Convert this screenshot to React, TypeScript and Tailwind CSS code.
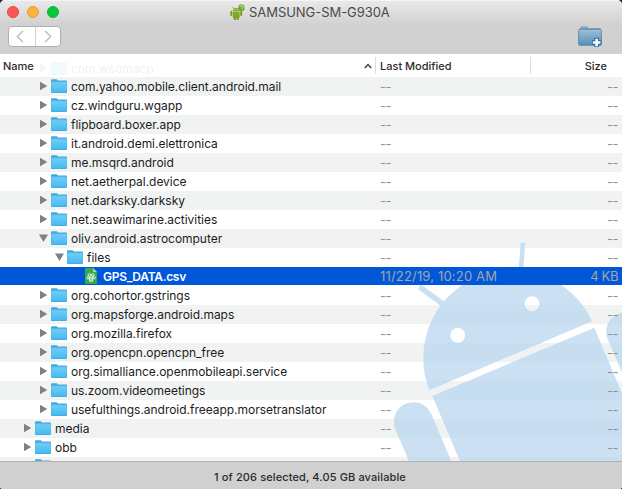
import React from "react";

type Row = { name: string; indent: number; kind: "closed" | "open" | "file" };

const rows: Row[] = [
  { name: "com.yahoo.mobile.client.android.mail", indent: 2, kind: "closed" },
  { name: "cz.windguru.wgapp", indent: 2, kind: "closed" },
  { name: "flipboard.boxer.app", indent: 2, kind: "closed" },
  { name: "it.android.demi.elettronica", indent: 2, kind: "closed" },
  { name: "me.msqrd.android", indent: 2, kind: "closed" },
  { name: "net.aetherpal.device", indent: 2, kind: "closed" },
  { name: "net.darksky.darksky", indent: 2, kind: "closed" },
  { name: "net.seawimarine.activities", indent: 2, kind: "closed" },
  { name: "oliv.android.astrocomputer", indent: 2, kind: "open" },
  { name: "files", indent: 3, kind: "open" },
  { name: "GPS_DATA.csv", indent: 4, kind: "file" },
  { name: "org.cohortor.gstrings", indent: 2, kind: "closed" },
  { name: "org.mapsforge.android.maps", indent: 2, kind: "closed" },
  { name: "org.mozilla.firefox", indent: 2, kind: "closed" },
  { name: "org.opencpn.opencpn_free", indent: 2, kind: "closed" },
  { name: "org.simalliance.openmobileapi.service", indent: 2, kind: "closed" },
  { name: "us.zoom.videomeetings", indent: 2, kind: "closed" },
  { name: "usefulthings.android.freeapp.morsetranslator", indent: 2, kind: "closed" },
  { name: "media", indent: 1, kind: "closed" },
  { name: "obb", indent: 1, kind: "closed" },
  { name: "", indent: 1, kind: "closed" },
];

const indents = ["pl-[7px]", "pl-[23px]", "pl-[39px]", "pl-[55px]", "pl-[71px]"];

function Folder() {
  return (
    <svg className="block h-[14px] w-4 shrink-0" viewBox="0 0 16 14">
      <defs>
        <linearGradient id="folder" x1="0" y1="0" x2="0" y2="1">
          <stop offset="0" stopColor="#6dcef8" />
          <stop offset="1" stopColor="#48b9ef" />
        </linearGradient>
      </defs>
      <path d="M0 1.2Q0 .3 1 .3H5.5Q6.3 .3 6.8 1.5H15.2Q16 1.5 16 2.3V13Q16 14 15 14H1Q0 14 0 13Z" fill="#3fa9dc" />
      <path d="M.3 3.4H15.7V12.4Q15.7 13.2 15 13.2H1Q.3 13.2 .3 12.4Z" fill="url(#folder)" />
      <path d="M.3 3.1H15.7" stroke="#8cdafb" strokeWidth=".6" />
    </svg>
  );
}

function Triangle({ open }: { open: boolean }) {
  return (
    <svg className="block h-[10px] w-[9px] shrink-0" viewBox="0 0 9 10">
      <path d={open ? "M0 1.5H9L4.5 9Z" : "M1 .8L8.3 5L1 9.2Z"} fill="#808080" />
    </svg>
  );
}

function CsvIcon() {
  return (
    <svg className="block h-4 w-3 shrink-0" viewBox="0 0 12 16">
      <path d="M0 1Q0 0 1 0H8L12 4V15Q12 16 11 16H1Q0 16 0 15Z" fill="#35a852" />
      <path d="M8 0L12 4H8Z" fill="#a5ddb0" />
      <g stroke="#e9f8ec" fill="none" strokeWidth=".9">
        <circle cx="4.4" cy="7" r="1.3" />
        <circle cx="7.8" cy="7" r="1.3" />
        <circle cx="2.9" cy="9.8" r="1.2" />
        <circle cx="9.2" cy="9.8" r="1.2" />
        <path d="M4 9.2H8M4.5 9V13.2H7.6V9M6 9V13" />
      </g>
    </svg>
  );
}

function Robot() {
  return (
    <svg className="absolute top-0 left-[380px] z-0 h-[384px] w-[242px]" viewBox="380 77 242 384" fill="#b6d4ef" stroke="#b6d4ef">
      <defs>
        <mask id="eyes" maskUnits="userSpaceOnUse" x="380" y="77" width="300" height="400">
          <rect x="380" y="77" width="300" height="400" fill="white" stroke="none" />
          <circle cx="532" cy="303.7" r="7.4" fill="black" stroke="none" />
          <circle cx="457.7" cy="335.3" r="7.4" fill="black" stroke="none" />
        </mask>
      </defs>
      <g opacity=".7">
        <g mask="url(#eyes)">
          <path stroke="none" d="M429.3 390.3A88.4 88.4 0 0 1 592 321.3Z" />
          <path d="M522.8 245.2L520.8 272" strokeWidth="4.6" strokeLinecap="square" />
          <path d="M421.5 288.2L447 307" strokeWidth="5.6" strokeLinecap="round" />
        </g>
        <path stroke="none" d="M432.3 396L594.3 327.7L651 462H460.4Z" />
        <path d="M413.3 421.7L450 508" strokeWidth="39" strokeLinecap="round" />
        <path d="M625.7 331.7L660 412" strokeWidth="39" strokeLinecap="round" />
      </g>
    </svg>
  );
}

function FileRow({ row, index }: { row: Row; index: number }) {
  const selected = row.kind === "file";
  const meta = selected ? "text-[#a5a5a5]" : "mt-[2px] tracking-[-0.5px] text-[#929292]";
  return (
    <div className={`h-[19px] shrink-0 ${index % 2 === 0 && !selected ? "bg-[#f1f3f3]" : ""}`}>
      <div className={`relative z-10 flex h-[18px] items-center ${selected ? "bg-[#0058d8]" : ""}`}>
        <div className={`flex w-[380px] shrink-0 items-center whitespace-nowrap ${indents[row.indent]}`}>
          {selected ? (
            <div className="flex w-8 shrink-0 justify-center pl-[7px]"><CsvIcon /></div>
          ) : (
            <div className="flex w-8 shrink-0 items-center gap-[3px]">
              <Triangle open={row.kind === "open"} />
              <Folder />
            </div>
          )}
          <span className={`mt-[2px] text-[12px] ${selected ? "font-semibold tracking-[-0.3px] text-white" : "tracking-[-0.03px] text-[#1c1c1c]"}`}>{row.name}</span>
        </div>
        <span className={`grow whitespace-nowrap ${meta} ${selected ? "tracking-[0.18px]" : ""}`}>{selected ? "11/22/19, 10:20 AM" : row.name ? "--" : ""}</span>
        <span className={`pr-1 whitespace-nowrap ${meta} ${selected ? "tracking-[-0.4px]" : ""}`}>{selected ? "4 KB" : row.name ? "--" : ""}</span>
      </div>
    </div>
  );
}

function TitleRobot() {
  return (
    <svg className="block h-4 w-[15px]" viewBox="0 0 15 16" fill="#7fa927">
      <path d="M3 7Q3 4 6.2 4T9.5 7ZM2.8 7.4H9.7V13Q9.7 14 8.7 14H3.8Q2.8 14 2.8 13Z" />
      <path d="M1.3 7.8V11M11.2 7.8V11M4.9 13.5V16M7.7 13.5V16" stroke="#759d23" strokeWidth="2" strokeLinecap="round" />
      <path d="M4 5L3 3M8.2 5L9 3.5" stroke="#759d23" strokeWidth=".8" />
      <rect x="8.5" y=".4" width="6" height="6.6" rx="2" fill="#70a92e" />
      <path d="M10.5 3V2H13V3.7L11.7 5" stroke="#d9edb4" strokeWidth=".8" fill="none" />
      <circle cx="5" cy="5.7" r=".5" fill="#e8f2d2" />
      <circle cx="7.3" cy="5.7" r=".5" fill="#e8f2d2" />
    </svg>
  );
}

function NewFolder() {
  return (
    <svg className="block h-[22px] w-[25px]" viewBox="0 0 26 23">
      <defs>
        <linearGradient id="newfolder" x1="0" y1="0" x2="0" y2="1">
          <stop offset="0" stopColor="#9bbfd9" />
          <stop offset="1" stopColor="#5790b7" />
        </linearGradient>
      </defs>
      <path d="M1 3Q1 2 2 2H2.5L3.3 .6H9.6L10.6 2.2H23Q24 2.2 24 3.2V6H1Z" fill="#829fb3" />
      <rect x=".6" y="3.8" width="23.8" height="16.4" rx="1" fill="url(#newfolder)" stroke="#5686a7" strokeWidth=".9" />
      <path d="M1.2 4.6H23.8" stroke="#a9c8dc" strokeWidth=".8" />
      <path d="M19.4 12.4V22M14.6 17.2H24.2" stroke="#286b9d" strokeWidth="4.8" strokeLinejoin="round" />
      <path d="M19.4 13.2V21.2M15.4 17.2H23.4" stroke="white" strokeWidth="2.7" />
    </svg>
  );
}

export default function App() {
  return (
    <div className="h-[489px] w-[622px] overflow-hidden bg-[#222222] font-['Inter','Liberation_Sans',sans-serif] text-[13px] leading-[18px]">
      <div className="flex h-full flex-col overflow-hidden rounded-t-[5px] rounded-b-[3px] bg-white">
        <header className="h-[54px] shrink-0 border-t border-[#f5f5f5] bg-linear-to-b from-[#e9e9e9] from-0% via-[#d1d1d1] via-45% to-[#d0d0d0]">
          <div className="flex h-[21px] items-center">
            <div className="flex w-[223px] gap-2 pl-[7px]">
              <i className="size-3 rounded-full border border-[#df4744] bg-[#fc5753]" />
              <i className="size-3 rounded-full border border-[#de9f34] bg-[#fdb43c]" />
              <i className="size-3 rounded-full border border-[#14ae35] bg-[#06c83f]" />
            </div>
            <div className="flex items-center gap-1 pl-[7px] whitespace-nowrap text-[#4b4b4b]">
              <TitleRobot />
              <span className="tracking-[-0.05px]">SAMSUNG-SM-G930A</span>
            </div>
          </div>
          <div className="flex items-start justify-between pt-1 pr-[19px] pl-2">
            <div className="flex h-[21px] w-[53px] rounded-[4px] border border-[#b0b0b0] bg-white">
              <div className="flex w-[27px] items-center justify-center border-r border-[#d2d2d2] pr-1">
                <svg width="8" height="13" viewBox="0 0 8 13"><path d="M7 1L1.3 6.5L7 12" fill="none" stroke="#b8b8b8" strokeWidth="1.3" /></svg>
              </div>
              <div className="flex grow items-center justify-center">
                <svg width="8" height="13" viewBox="0 0 8 13"><path d="M1 1L6.7 6.5L1 12" fill="none" stroke="#b8b8b8" strokeWidth="1.3" /></svg>
              </div>
            </div>
            <NewFolder />
          </div>
        </header>
        <div className="relative flex h-[23px] shrink-0 items-center text-[11px] font-medium text-[#2b2b2b]">
          <div className="absolute top-[5px] left-[39px] flex h-[18px] items-center text-[12px] font-normal opacity-[0.07]">
            <div className="flex w-8 items-center gap-[3px]"><Triangle open={false} /><Folder /></div>
            <span className="mt-[2px]">com.wsomacp</span>
          </div>
          <div className="flex w-[375px] items-center justify-between pr-[3px] pl-[3px]">
            <span>Name</span>
            <svg width="8" height="6" viewBox="0 0 8 6"><path d="M.8 5L4 1.5L7.2 5" fill="none" stroke="#404040" strokeWidth="1.4" /></svg>
          </div>
          <div className="flex h-[17px] w-[156px] items-center border-x border-[#dddddd] pl-1">Last Modified</div>
          <div className="grow pr-[15px] text-right">Size</div>
        </div>
        <main className="relative flex h-[384px] shrink-0 flex-col overflow-hidden">
          <Robot />
          {rows.map((row, i) => <FileRow key={i} row={row} index={i} />)}
        </main>
        <footer className="flex grow items-center justify-center border-t border-[#b1b1b1] bg-[#d0d0d0] pt-[3px] pr-[2px] text-[11px] font-medium tracking-[0.12px] text-[#2b2b2b]">
          1 of 206 selected, 4.05 GB available
        </footer>
      </div>
    </div>
  );
}
